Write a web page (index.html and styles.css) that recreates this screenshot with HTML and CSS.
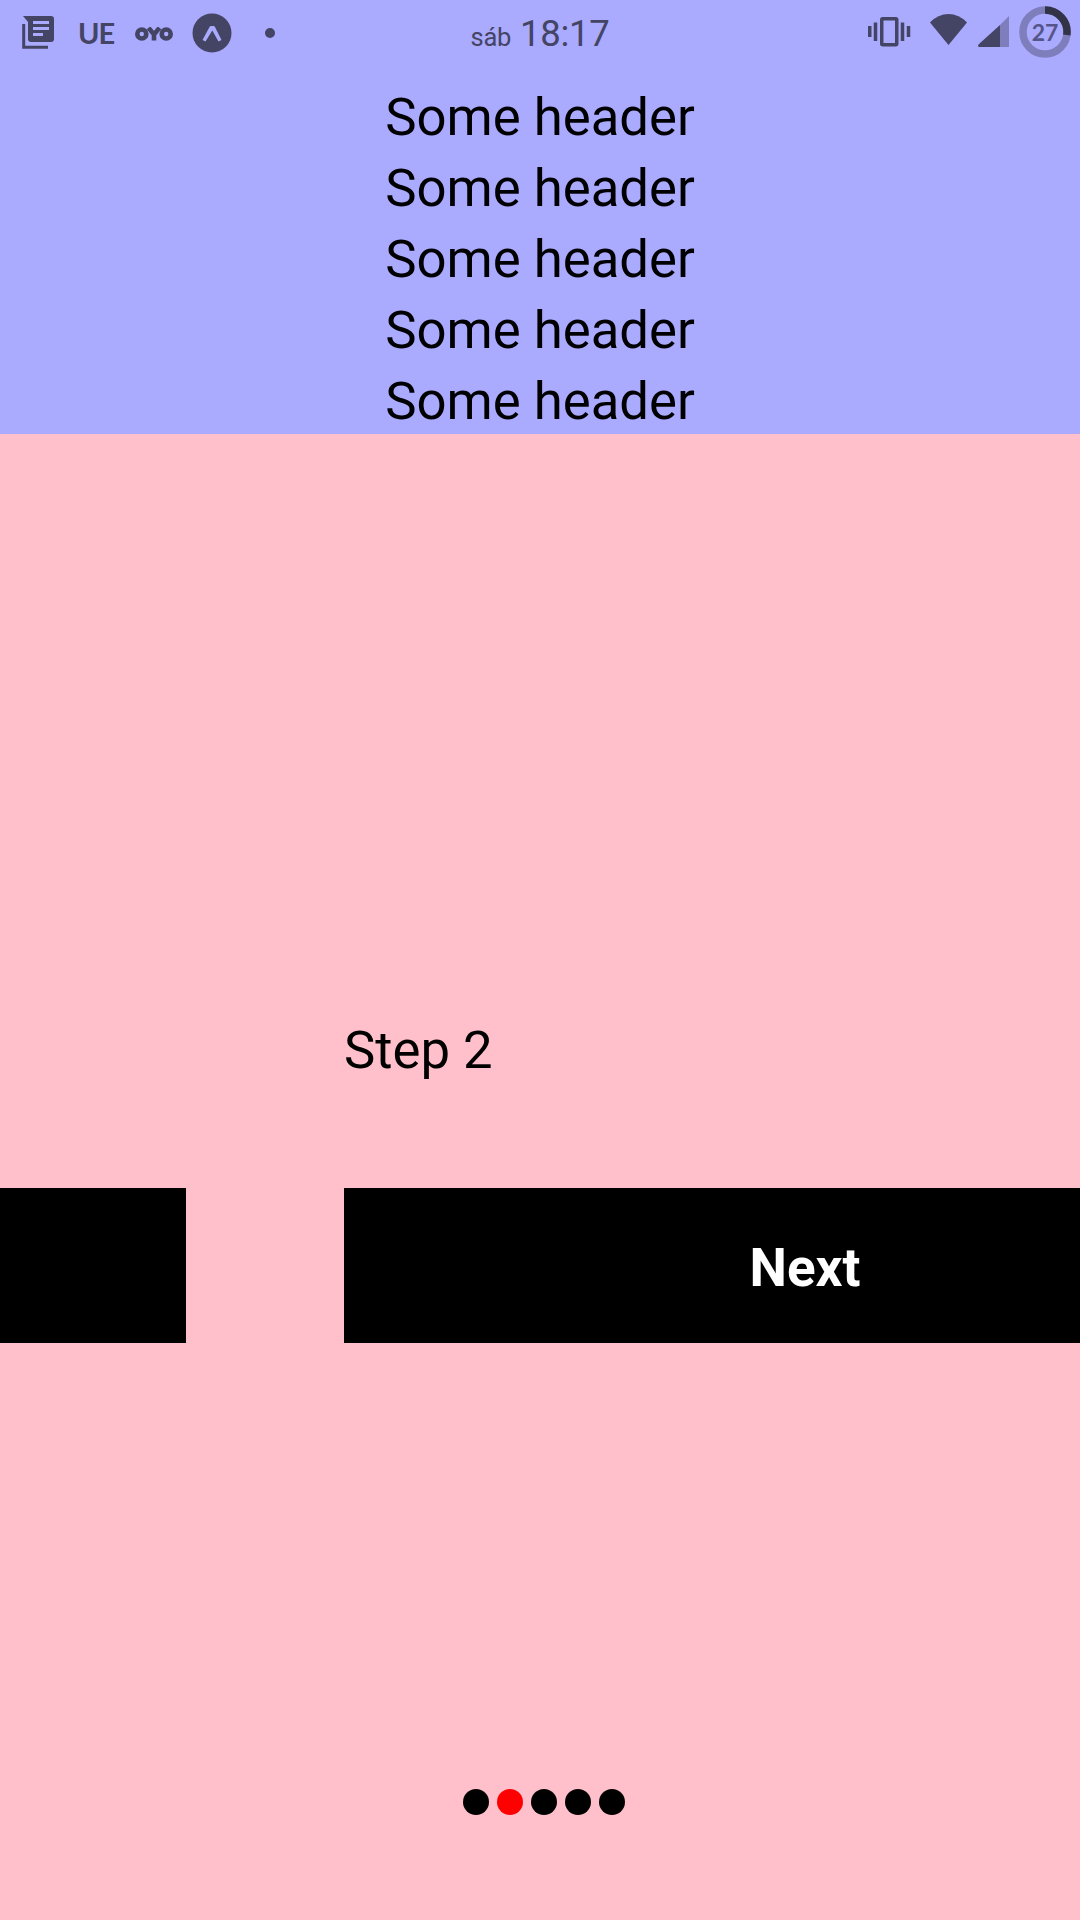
FILE: index.html
```html
<!DOCTYPE html>
<html lang="en">
<head>
<meta charset="utf-8">
<title>Steps</title>
<link rel="stylesheet" href="styles.css">
</head>
<body>
<div class="screen">
  <header class="top">
    <div class="status">
      <div class="notifications">
        <svg class="icon-news" width="33" height="33" viewBox="0 0 33 33"><path fill="currentColor" fill-rule="evenodd" d="M1 0H29Q32 0 32 3V23Q32 26 29 26H9Q6 26 6 23V6ZM11 5V8H27V5ZM11 11V14H27V11ZM11 17V20H21V17Z"/><path d="M1.7 8V31.3H26" fill="none" stroke="currentColor" stroke-width="3"/></svg>
        <span class="ue">UE</span>
        <svg class="icon-oyo" width="38" height="14" viewBox="0 0 38 14"><g fill="none" stroke="currentColor" stroke-width="4.6"><circle cx="6.8" cy="7" r="4.5"/><circle cx="31.2" cy="7" r="4.5"/><path d="M13.5 .8L19 7.5L24.5 .8M19 7V13.5"/></g></svg>
        <svg class="icon-expo" width="40" height="40" viewBox="0 0 40 40"><circle cx="20" cy="20" r="19.5" fill="currentColor"/><path fill="#aaf" d="M10.5 27L17.5 14Q18 13 19 13H21.5Q22.5 13 23 14L29.5 27L26.5 28.5L20.3 17.5L13.5 28.5Z"/></svg>
        <span class="more"></span>
      </div>
      <div class="clock"><span class="day">sáb</span><span>18:17</span></div>
      <div class="system">
        <svg class="icon-vibrate" width="43" height="32" viewBox="0 0 43 32"><path fill="none" stroke="currentColor" stroke-width="3.5" d="M1.75 10V21M7.5 6.5V25M34.5 6.5V25M40.5 10V21"/><rect x="13.75" y="2.75" width="15" height="26" rx="1" fill="none" stroke="currentColor" stroke-width="3.5"/></svg>
        <svg class="icon-wifi" width="38" height="32" viewBox="0 0 38 32"><path fill="currentColor" d="M0 8.5Q8 0 18.5 0T37 8.5L18.5 31Z"/></svg>
        <svg class="icon-signal" width="31" height="32" viewBox="0 0 31 32"><path fill="#7e7ebc" d="M22 9L31 0V31H22Z"/><path fill="currentColor" d="M22 9V31H1Q-1 30 1 28Z"/></svg>
        <div class="battery">
          <svg width="52" height="52" viewBox="0 0 52 52"><circle cx="26" cy="26" r="22" fill="none" stroke="#7e7ebc" stroke-width="7.5"/><path d="M26 4A22 22 0 0 1 47.8 29" fill="none" stroke="#333347" stroke-width="7.5"/></svg>
          <span class="level">27</span>
        </div>
      </div>
    </div>
    <div class="headings">
      <div>Some header</div>
      <div>Some header</div>
      <div>Some header</div>
      <div>Some header</div>
      <div>Some header</div>
    </div>
  </header>
  <main class="pager">
    <div class="track">
      <section class="slide"><div class="label"></div><div class="button"></div></section>
      <section class="slide"><div class="label">Step 2</div><div class="button">Next</div></section>
    </div>
    <div class="dots"><i class="dot"></i><i class="dot active"></i><i class="dot"></i><i class="dot"></i><i class="dot"></i></div>
  </main>
</div>
</body>
</html>
```
FILE: styles.css
```css
* { box-sizing: border-box; }
body { margin: 0; font-family: Roboto, sans-serif; color: #000; }
.screen { width: 1080px; height: 1920px; overflow: hidden; display: flex; flex-direction: column; background: #ffc0cb; }
.top { height: 434px; background: #aaf; flex: none; }
.status { height: 82px; display: grid; grid-template-columns: 1fr auto 1fr; align-items: start; color: #444464; }
.notifications, .system { height: 65px; display: flex; align-items: center; }
.notifications { padding-left: 22px; }
.ue { font: 700 29px/63px Lato, sans-serif; letter-spacing: -1px; width: 36px; margin-left: 23px; }
.icon-oyo { margin-left: 21px; margin-top: 2px; }
.icon-expo { margin-left: 19px; }
.more { width: 10px; height: 10px; border-radius: 50%; background: currentColor; margin-left: 33px; }
.clock { font-size: 36.5px; font-weight: 400; line-height: 67px; height: 65px; display: flex; align-items: baseline; gap: 9px; letter-spacing: -.3px; }
.day { font-size: 25.5px; }
.system { height: 64px; justify-content: flex-end; padding-right: 9px; }
.icon-wifi { margin-left: 19px; margin-top: -4px; }
.icon-signal { margin-left: 10px; }
.battery { display: grid; place-items: center; margin-left: 10px; }
.battery > * { grid-area: 1 / 1; }
.level { font-family: Lato, sans-serif; font-weight: 700; font-size: 23px; line-height: 54px; color: #55558a; }
.headings { font-size: 52.7px; line-height: 71px; text-align: center; }
.pager { flex: 1; display: flex; flex-direction: column; justify-content: space-between; padding: 581px 0 105px; }
.track { display: flex; margin-left: -815px; }
.slide { width: 1080px; flex: none; padding: 0 79px; }
.label { height: 71px; font-size: 52.7px; line-height: 71px; margin-bottom: 102px; }
.button { height: 155px; background: #000; color: #fff; font-size: 53px; font-weight: 700; line-height: 161px; text-align: center; }
.dots { display: flex; gap: 8px; margin-left: 463px; }
.dot { width: 26px; height: 26px; border-radius: 50%; background: #000; }
.active { background: #f00; }
```
